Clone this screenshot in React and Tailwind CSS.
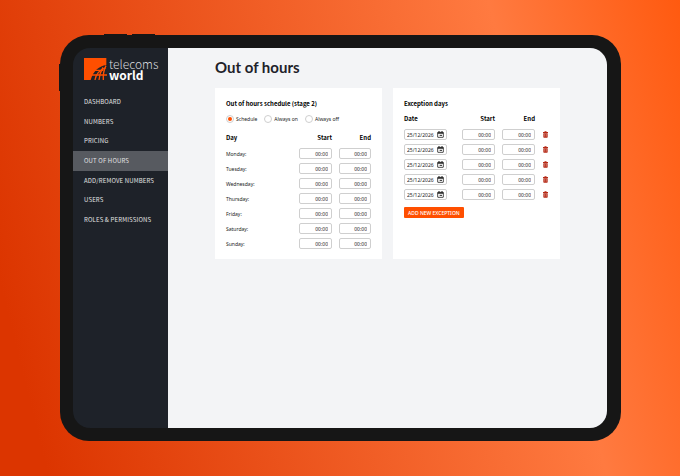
import { useState } from "react";

const navItems = ["Dashboard", "Numbers", "Pricing", "Out of hours", "Add/remove numbers", "Users", "Roles & permissions"];
const days = ["Monday", "Tuesday", "Wednesday", "Thursday", "Friday", "Saturday", "Sunday"];
const modes = ["Schedule", "Always on", "Always off"];
const exceptions = [1, 2, 3, 4, 5];

function LogoMark() {
  return (
    <svg className="size-[23px] shrink-0" viewBox="0 0 69 69" aria-hidden="true">
      <path d="M0 0h67v21C46 24 28 38 20 66H0z" fill="#ff4f00" />
      <g fill="none" stroke="#ff4f00" strokeWidth="4">
        <path d="M22 51h47" />
        <path d="M33 37h25" />
        <path d="M33 66c3-18 13-30 33-37" />
        <path d="M45 66c1-16 6-28 12-38" />
        <path d="M58 66c-1-14 1-29 8-43" />
      </g>
    </svg>
  );
}

function CalendarIcon() {
  return (
    <svg className="size-[7px] shrink-0" viewBox="0 0 21 21" aria-hidden="true">
      <path d="M6 0v4M15 0v4" stroke="#222" strokeWidth="3" />
      <rect x="2" y="4" width="17" height="15" rx="1" fill="none" stroke="#222" strokeWidth="2.4" />
      <path d="M2 6h17" stroke="#222" strokeWidth="4" />
      <path d="M8 13h7" stroke="#222" strokeWidth="3" />
    </svg>
  );
}

function TrashIcon() {
  return (
    <svg className="h-[7px] w-[5px]" viewBox="0 0 15 21" aria-hidden="true">
      <path d="M0 3h4.500V1h6v2H15v3H0zM1 7h13v11q0 2-2 2H3q-2 0-2-2z" fill="#b52a17" />
      <path d="M5 9v8M10 9v8" stroke="#e7b5ae" strokeWidth="1.500" />
    </svg>
  );
}

function TimeInput({ id, label }) {
  return (
    <input
      id={id}
      aria-label={label}
      defaultValue="00:00"
      className="block h-[11px] w-full rounded-[2px] border border-[#cfcfcf] bg-white px-[3px] text-right font-['Noto_Sans',sans-serif] text-[5px] leading-[8px] text-[#222]"
    />
  );
}

function Sidebar() {
  return (
    <aside className="flex w-[95px] shrink-0 flex-col bg-[#1e2229] pt-[10px]">
      <a href="#home" className="flex items-start gap-[2px] pl-[11px] text-white">
        <LogoMark />
        <span className="text-[12px] leading-[11px]">
          <span className="font-light text-[#d8dade]">telecoms</span>
          <br />
          <span className="font-bold">world</span>
        </span>
      </a>
      <nav className="mt-[11px] grid h-[138px] grid-rows-7">
        {navItems.map((item) => (
          <a
            key={item}
            href="#page"
            className={
              item === "Out of hours"
                ? "flex items-center whitespace-nowrap bg-[#575a60] pl-[11px] text-[#e2e2e3]"
                : "flex items-center whitespace-nowrap pl-[11px] text-[#e2e2e3]"
            }
          >
            <span className="text-[6px] uppercase leading-[8px] tracking-wide">{item}</span>
          </a>
        ))}
      </nav>
    </aside>
  );
}

function ScheduleCard() {
  const [mode, setMode] = useState("Schedule");

  return (
    <section className="bg-white px-[11px] pb-[8px] pt-[12px]">
      <h2 className="font-bold">Out of hours schedule (stage 2)</h2>
      <div className="mt-[7px] flex gap-[7px]">
        {modes.map((m) => (
          <label
            key={m}
            className="flex items-center gap-[2px] whitespace-nowrap font-['Noto_Sans',sans-serif] text-[5px] leading-[8px] text-[#222]"
          >
            <input
              type="radio"
              name="mode"
              checked={mode === m}
              onChange={() => setMode(m)}
              className="size-[8px] appearance-none rounded-full border border-[#cfcfcf] bg-white bg-clip-content p-px checked:bg-[#ff4f00]"
            />
            {m}
          </label>
        ))}
      </div>
      <table className="mt-[11px] w-full table-fixed">
        <thead>
          <tr>
            <th className="pb-[4px] text-left">Day</th>
            <th className="w-[40px] pb-[4px] text-right">Start</th>
            <th className="w-[39px] pb-[4px] text-right">End</th>
          </tr>
        </thead>
        <tbody>
          {days.map((day) => (
            <tr key={day} className="h-[15px] font-['Noto_Sans',sans-serif] text-[5px] leading-[8px] text-[#222]">
              <td>
                <label htmlFor={day}>{day}:</label>
              </td>
              <td className="pl-[7px]"><TimeInput id={day} /></td>
              <td className="pl-[7px]"><TimeInput label={`${day} end`} /></td>
            </tr>
          ))}
        </tbody>
      </table>
    </section>
  );
}

function ExceptionsCard() {
  return (
    <section className="bg-white px-[11px] pb-[8px] pt-[12px]">
      <h2 className="font-bold">Exception days</h2>
      <table className="mt-[7px] w-full table-fixed">
        <thead>
          <tr>
            <th className="pb-[4px] text-left">Date</th>
            <th className="w-[40px] pb-[4px] text-right">Start</th>
            <th className="w-[40px] pb-[4px] text-right">End</th>
            <th className="w-[14px]" />
          </tr>
        </thead>
        <tbody>
          {exceptions.map((n) => (
            <tr key={n} className="h-[15px] text-[#222]">
              <td>
                <div className="flex h-[11px] w-[43px] items-center rounded-[2px] border border-[#cfcfcf] px-[2px]">
                  <input
                    aria-label={`Exception ${n} date`}
                    defaultValue="25/12/2026"
                    className="w-full min-w-0 font-['Noto_Sans',sans-serif] text-[5px] leading-[8px]"
                  />
                  <CalendarIcon />
                </div>
              </td>
              <td className="pl-[7px]"><TimeInput label={`Exception ${n} start`} /></td>
              <td className="pl-[7px]"><TimeInput label={`Exception ${n} end`} /></td>
              <td>
                <button className="ml-auto mr-px block" aria-label={`Delete exception ${n}`}>
                  <TrashIcon />
                </button>
              </td>
            </tr>
          ))}
        </tbody>
      </table>
      <button className="mt-[5px] block h-[11px] whitespace-nowrap rounded-[1px] bg-[#ff4f00] px-[4px] font-['Noto_Sans',sans-serif] text-[5px] font-medium uppercase leading-[8px] text-white">
        Add new exception
      </button>
    </section>
  );
}

export default function App() {
  return (
    <div className="flex min-h-screen flex-col bg-[linear-gradient(76deg,#dc3500_6%,#ff7a40_76%,#ff5a10_100%)] py-[35px] pl-[60px] pr-[59px] font-['Noto_Sans_CJK_SC','Noto_Sans',sans-serif]">
      <div className="relative flex flex-1 flex-col rounded-[29px] bg-[#161616] p-[13px] pr-[14px]">
        <div className="absolute -top-px left-[44px] h-[2px] w-[23px] bg-[#161616]" />
        <div className="absolute -top-px left-[72px] h-[2px] w-[23px] bg-[#161616]" />
        <div className="absolute -left-px top-[29px] h-[27px] w-[2px] bg-[#161616]" />
        <div className="flex flex-1 overflow-hidden rounded-[17px]">
          <Sidebar />
          <main className="min-w-0 flex-1 bg-[#f3f4f6] px-[47px] pt-[9px] text-[6px] leading-[8px] text-black">
            <h1 className="font-['Lato',sans-serif] text-[15px] font-bold leading-[20px] text-[#1e2229]">Out of hours</h1>
            <div className="mt-[11px] grid grid-cols-2 gap-[11px]">
              <ScheduleCard />
              <ExceptionsCard />
            </div>
          </main>
        </div>
      </div>
    </div>
  );
}
